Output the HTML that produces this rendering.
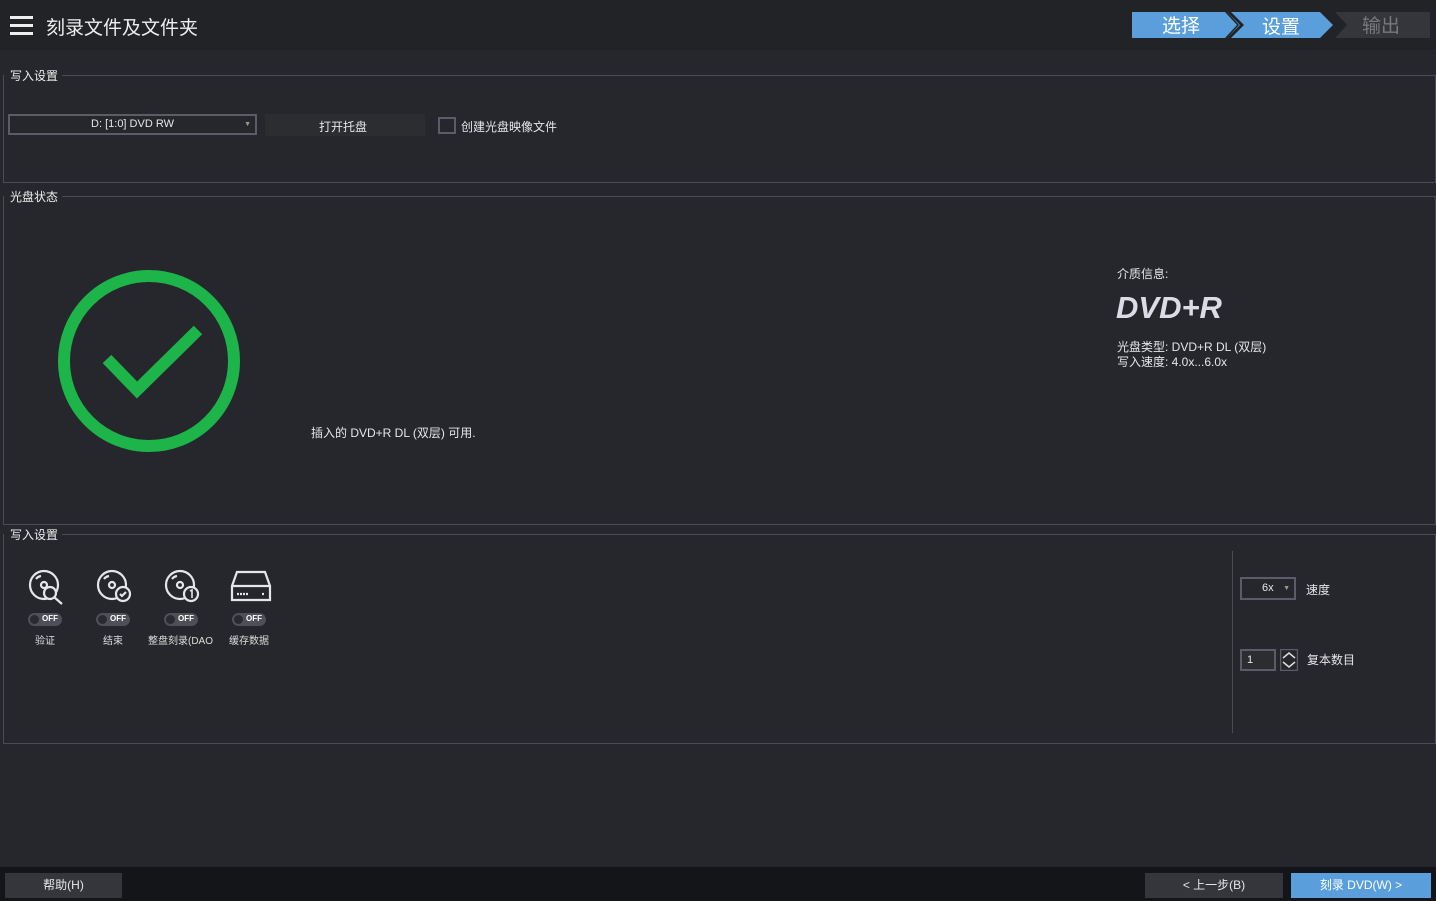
<!DOCTYPE html>
<html><head><meta charset="utf-8"><style>
*{margin:0;padding:0;box-sizing:border-box}
body{width:1436px;height:901px;background:#26272c;font-family:"Liberation Sans","Noto Sans CJK SC",sans-serif;color:#e6e6ea;position:relative;overflow:hidden;font-size:12px}
.abs{position:absolute}
.top{left:0;top:0;width:1436px;height:50px;background:#222327}
.fs{position:absolute;border:1px solid #4b4b53;left:3px;width:1433px}
.lg{position:absolute;background:#26272c;padding:0 4px 0 6px;font-size:12px;color:#eee;top:-9px;left:0}
.tog{position:absolute;width:34px;height:13px;border-radius:7px;background:#4f5057;font-size:8px;color:#fff;font-weight:bold}
.tog i{position:absolute;left:2px;top:2px;width:9px;height:9px;border-radius:50%;background:#2a2b30}
.tog span{position:absolute;left:14px;top:1px}
.lab{position:absolute;font-size:10px;color:#ddd}
</style></head><body>
<div class="abs top"></div>
<div class="abs" style="left:10px;top:16px;width:23px;height:3px;background:#eee;box-shadow:0 8px 0 #eee,0 16px 0 #eee"></div>
<div class="abs" style="left:46px;top:13px;font-size:19px;color:#eee">刻录文件及文件夹</div>
<svg class="abs" style="left:1130px;top:11px" width="306" height="28">
<polygon points="2,1 95,1 107,14 95,27 2,27" fill="#5a9fdb"/>
<polygon points="97,1 190,1 203,14 190,27 97,27 109,14" fill="#5a9fdb"/>
<polygon points="96,0 110,14 96,28 100,28 114,14 100,0" fill="#222327"/>
<polygon points="205,1 300,1 300,27 205,27 217,14" fill="#35363c"/>
<text x="32" y="21" font-size="19" fill="#fff" font-family="Noto Sans CJK SC">选择</text>
<text x="132" y="22" font-size="19" fill="#fff" font-family="Noto Sans CJK SC">设置</text>
<text x="232" y="21" font-size="19" fill="#77787e" font-family="Noto Sans CJK SC">输出</text>
</svg>

<div class="fs" style="top:75px;height:108px"><div class="lg">写入设置</div></div>
<div class="abs" style="left:8px;top:114px;width:249px;height:21px;border:2px solid #5c5b68;font-size:11px;text-align:center;line-height:17px">D: [1:0] DVD RW<span style="position:absolute;right:4px;font-size:7px;color:#999">▼</span></div>
<div class="abs" style="left:265px;top:114px;width:160px;height:22px;background:#2c2d31"></div>
<div class="abs" style="left:319px;top:118px;font-size:12px">打开托盘</div>
<div class="abs" style="left:438px;top:117px;width:18px;height:17px;border:2px solid #5c5b68"></div>
<div class="abs" style="left:461px;top:118px;font-size:12px">创建光盘映像文件</div>

<div class="fs" style="top:196px;height:329px"><div class="lg">光盘状态</div></div>
<svg class="abs" style="left:55px;top:267px" width="190" height="190"><circle cx="94" cy="94" r="85" fill="none" stroke="#1db44a" stroke-width="12"/><polyline points="52,92 82,123 143,63" fill="none" stroke="#1db44a" stroke-width="12"/></svg>
<div class="abs" style="left:311px;top:424px;font-size:12px">插入的 DVD+R DL (双层) 可用.</div>
<div class="abs" style="left:1117px;top:265px;font-size:12px">介质信息:</div>
<div class="abs" style="left:1116px;top:290px;font-size:31px;font-weight:bold;font-style:italic;color:#dcdce6">DVD+R</div>
<div class="abs" style="left:1117px;top:340px;font-size:12px;line-height:15px">光盘类型: DVD+R DL (双层)<br>写入速度: 4.0x...6.0x</div>

<div class="fs" style="top:534px;height:210px"><div class="lg">写入设置</div></div>
<svg class="abs" style="left:25px;top:568px" width="250" height="40" fill="none" stroke="#e6e6ea" stroke-width="2.2">
<circle cx="19" cy="17" r="14"/><circle cx="19" cy="17" r="3"/><path d="M11 11a8 8 0 0 1 5-3"/><circle cx="25" cy="25" r="6" fill="#26272c"/><path d="M29 29l8 7"/>
<circle cx="87" cy="17" r="14"/><circle cx="87" cy="17" r="3"/><path d="M79 11a8 8 0 0 1 5-3"/><circle cx="98" cy="26" r="7" fill="#26272c"/><path d="M95 26l2 2 4-4"/>
<circle cx="155" cy="17" r="14"/><circle cx="155" cy="17" r="3"/><path d="M147 11a8 8 0 0 1 5-3"/><circle cx="166" cy="26" r="7" fill="#26272c"/><path d="M165 23l2-1v8" stroke-width="1.6"/>
<path d="M212 4h28l5 14v14h-38V18z"/><path d="M207 18h38"/><path d="M212 26h12M237 26h2" stroke-dasharray="2 1"/>
</svg>
<div class="tog" style="left:28px;top:613px"><i></i><span>OFF</span></div>
<div class="tog" style="left:96px;top:613px"><i></i><span>OFF</span></div>
<div class="tog" style="left:164px;top:613px"><i></i><span>OFF</span></div>
<div class="tog" style="left:232px;top:613px"><i></i><span>OFF</span></div>
<div class="lab" style="left:35px;top:632px">验证</div>
<div class="lab" style="left:103px;top:632px">结束</div>
<div class="lab" style="left:148px;top:632px">整盘刻录(DAO</div>
<div class="lab" style="left:229px;top:632px">缓存数据</div>
<div class="abs" style="left:1232px;top:551px;width:1px;height:182px;background:#4b4b53"></div>
<div class="abs" style="left:1240px;top:577px;width:56px;height:23px;border:2px solid #5c5b68;font-size:11px;line-height:19px;padding-left:20px">6x<span style="position:absolute;right:4px;font-size:7px;color:#999">▼</span></div>
<div class="abs" style="left:1306px;top:581px;font-size:12px">速度</div>
<div class="abs" style="left:1240px;top:649px;width:36px;height:22px;border:2px solid #5c5b68;background:#2c2d31;font-size:11px;padding-left:5px;line-height:18px">1</div>
<svg class="abs" style="left:1280px;top:649px" width="18" height="22" fill="none" stroke="#ddd" stroke-width="1.5"><rect x=".5" y=".5" width="17" height="21" stroke="#5c5b68"/><path d="M3 9l6-5 6 5M3 13l6 5 6-5"/></svg>
<div class="abs" style="left:1307px;top:651px;font-size:12px">复本数目</div>

<div class="abs" style="left:0;top:867px;width:1436px;height:34px;background:#141519"></div>
<div class="abs" style="left:5px;top:873px;width:117px;height:25px;background:#35363b;font-size:12px;text-align:center;line-height:25px">帮助(H)</div>
<div class="abs" style="left:1145px;top:873px;width:138px;height:25px;background:#35363b;font-size:12px;text-align:center;line-height:25px">&lt; 上一步(B)</div>
<div class="abs" style="left:1291px;top:873px;width:140px;height:25px;background:#5a9fdb;font-size:12px;text-align:center;line-height:25px;color:#fff">刻录 DVD(W) &gt;</div>
</body></html>
